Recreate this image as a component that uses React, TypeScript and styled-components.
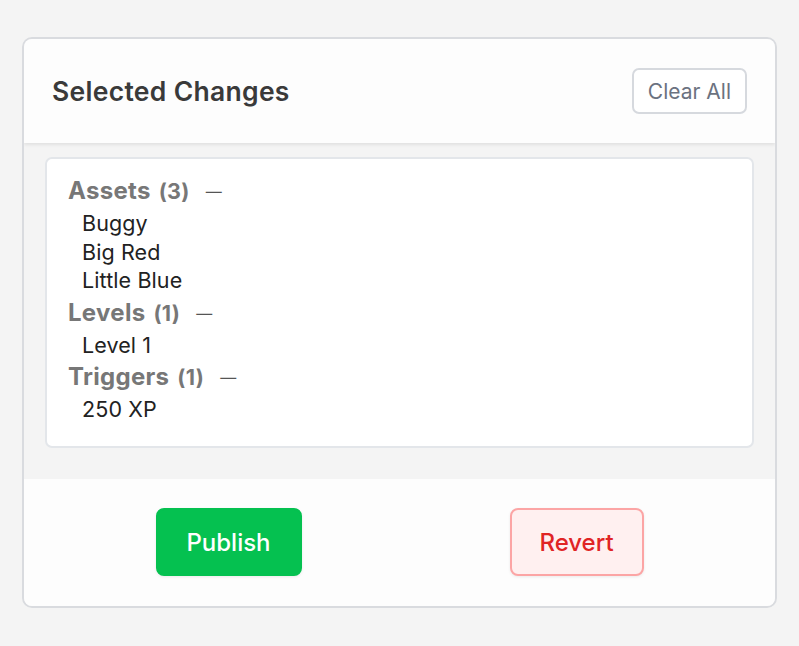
import React from "react";
import styled, { createGlobalStyle } from "styled-components";

const Global = createGlobalStyle`
  html, body { margin: 0; padding: 0; background: #f4f4f4; }
  body { font-family: Inter, "Noto Sans", "Liberation Sans", sans-serif; }
  * { box-sizing: border-box; }
`;

const Page = styled.div`
  padding: 37px 22px 41px 22px;
`;

const Card = styled.div`
  width: 755px;
  border: 2px solid #d9dbdf;
  border-radius: 10px;
  overflow: hidden;
  background: #f4f4f4;
`;

const Header = styled.div`
  height: 104px;
  background: #fdfdfd;
  display: flex;
  align-items: center;
  justify-content: space-between;
  padding: 0 28px 0 28px;
  box-shadow: 0 2px 3px rgba(0, 0, 0, 0.08);
  position: relative;
`;

const Title = styled.h2`
  margin: 0;
  font-size: 26.5px;
  font-weight: 600;
  color: #3a3a3a;
  letter-spacing: 0.3px;
`;

const ClearButton = styled.button`
  height: 46px;
  padding: 0 14px;
  border: 2px solid #d6d9de;
  border-radius: 7px;
  background: #ffffff;
  color: #6b7280;
  font-family: inherit;
  font-size: 21px;
  font-weight: 400;
`;

const Body = styled.div`
  padding: 14px 21px 31px 21px;
`;

const ListBox = styled.div`
  background: #ffffff;
  border: 2px solid #e3e6ea;
  border-radius: 7px;
  padding: 14px 21px 22px 21px;
`;

const GroupHead = styled.div`
  display: flex;
  align-items: baseline;
  height: 36px;
  line-height: 36px;
  color: #777777;
  font-size: 24px;
  font-weight: 700;
  letter-spacing: 0.3px;
`;

const Count = styled.span`
  font-size: 21.5px;
  margin-left: 8px;
`;

const Dash = styled.span`
  margin-left: 16px;
  font-size: 16px;
  font-weight: 400;
  color: #555555;
  position: relative;
  top: -2px;
`;

const Item = styled.div`
  padding-left: 14px;
  height: 28.5px;
  line-height: 28.5px;
  font-size: 21.5px;
  color: #222222;
  letter-spacing: 0.1px;
`;

const Footer = styled.div`
  height: 127px;
  background: #fdfdfd;
  display: flex;
  align-items: center;
  justify-content: center;
  gap: 208px;
`;

const ActionButton = styled.button<{ $variant: "primary" | "danger" }>`
  height: 68px;
  padding: 0;
  width: ${(p) => (p.$variant === "primary" ? "146px" : "134px")};
  border-radius: 8px;
  font-family: inherit;
  font-size: 24px;
  font-weight: 500;
  border: 2px solid ${(p) => (p.$variant === "primary" ? "#05c150" : "#fca5a5")};
  background: ${(p) => (p.$variant === "primary" ? "#05c150" : "#fff0f0")};
  color: ${(p) => (p.$variant === "primary" ? "#ffffff" : "#e02424")};
  box-shadow: 0 1px 3px rgba(0, 0, 0, 0.08);
`;

const groups = [
  { name: "Assets", items: ["Buggy", "Big Red", "Little Blue"] },
  { name: "Levels", items: ["Level 1"] },
  { name: "Triggers", items: ["250 XP"] },
];

export default function App() {
  return (
    <>
      <Global />
      <Page>
        <Card>
          <Header>
            <Title>Selected Changes</Title>
            <ClearButton>Clear All</ClearButton>
          </Header>
          <Body>
            <ListBox>
              {groups.map((g) => (
                <React.Fragment key={g.name}>
                  <GroupHead>
                    {g.name}
                    <Count>({g.items.length})</Count>
                    <Dash>—</Dash>
                  </GroupHead>
                  {g.items.map((i) => (
                    <Item key={i}>{i}</Item>
                  ))}
                </React.Fragment>
              ))}
            </ListBox>
          </Body>
          <Footer>
            <ActionButton $variant="primary">Publish</ActionButton>
            <ActionButton $variant="danger">Revert</ActionButton>
          </Footer>
        </Card>
      </Page>
    </>
  );
}
